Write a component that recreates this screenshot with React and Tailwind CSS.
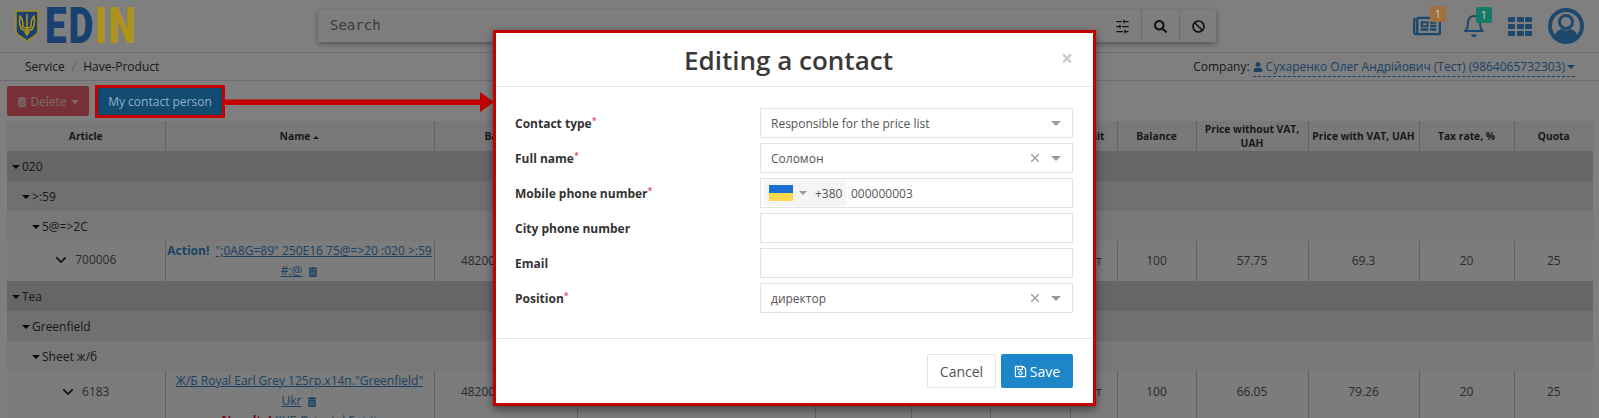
import { FaBan, FaChevronDown, FaRegNewspaper, FaRegSave, FaSearch, FaTrashAlt, FaUser } from 'react-icons/fa';
import { LuBell, LuSlidersHorizontal, LuX } from 'react-icons/lu';

const COLS = ['w-[158px]', 'w-[269px]', 'w-[143px]', 'w-[238px]', 'w-[96px]', 'w-[79px]', 'w-[80px]', 'w-[47px]', 'w-[79px]', 'w-[112px]', 'w-[111px]', 'w-[95px]', 'w-[79px]'];

const HEADERS = ['Article', 'Name', 'Barcode', '', '', '', '', 'Unit', 'Balance', 'Price without VAT, UAH', 'Price with VAT, UAH', 'Tax rate, %', 'Quota'];

const Caret = ({ className = 'border-t-[#333]' }) => (
  <span className={`inline-block w-0 h-0 border-x-[4px] border-t-[4px] border-x-transparent ${className}`} />
);

const Trident = () => (
  <svg viewBox="0 0 24 32" className="w-[24px] h-[32px] shrink-0">
    <path d="M1 1h22v20c0 4-6 6-11 10C7 27 1 25 1 21z" fill="#184070" stroke="#a88c1a" strokeWidth="1.5" />
    <path d="M12 4v18M12 25l-2-3h4zM5 6c-1 6 0 12 3 14h8c3-2 4-8 3-14-2 2-3 7-3 11-1 1-3 1-4 1s-3 0-4-1c0-4-1-9-3-11z" fill="none" stroke="#b0941a" strokeWidth="1.5" />
  </svg>
);

const AvatarIcon = () => (
  <svg viewBox="0 0 36 36" className="w-[36px] h-[36px]">
    <circle cx="18" cy="18" r="16" fill="none" stroke="#3a8fd6" strokeWidth="4" />
    <circle cx="18" cy="14" r="6.5" fill="none" stroke="#3a8fd6" strokeWidth="3" />
    <path d="M6 29c2-6 6-8 8-8 2 2 6 2 8 0 2 0 6 2 8 8-6 6-18 6-24 0z" fill="#3a8fd6" />
  </svg>
);

const GroupRow = ({ label, depth, bg }) => (
  <tr className={`h-[30px] text-[#333] ${bg}`}>
    <td colSpan={13} className={depth === 0 ? 'pl-[5px]' : depth === 1 ? 'pl-[15px]' : 'pl-[25px]'}>
      <span className="inline-flex items-center gap-[2px]">
        <Caret className="border-t-[#111]" />
        {label}
      </span>
    </td>
  </tr>
);

const DataRow = ({ code, name, tall, price, vat }) => {
  const top = tall ? 'align-top pt-[12px]' : '';
  return (
    <tr className="bg-[#f8f8f8] text-center">
      <td className={tall ? 'h-[80px] align-top pt-[12px]' : 'h-[40px]'}>
        <span className="inline-flex items-center gap-[8px]">
          <FaChevronDown className="text-[12px] text-[#333]" />
          {code}
        </span>
      </td>
      <td className="border-l border-[#c4c4c4] align-top leading-[20px]">{name}</td>
      <td className={`border-l border-[#c4c4c4] ${top}`}>4820000000000</td>
      <td className="border-l border-[#c4c4c4]" />
      <td className="border-l border-[#c4c4c4]" />
      <td className="border-l border-[#c4c4c4]" />
      <td className="border-l border-[#c4c4c4]" />
      <td className={`border-l border-[#c4c4c4] ${top}`}>шт</td>
      <td className={`border-l border-[#c4c4c4] ${top}`}>100</td>
      <td className={`border-l border-[#c4c4c4] ${top}`}>{price}</td>
      <td className={`border-l border-[#c4c4c4] ${top}`}>{vat}</td>
      <td className={`border-l border-[#c4c4c4] ${top}`}>20</td>
      <td className={`border-l border-[#c4c4c4] ${top}`}>25</td>
    </tr>
  );
};

const Label = ({ text, required }) => (
  <div className="w-[245px] pt-[1px] text-[12px] font-bold text-[#333]">
    {text}
    {required && <sup className="text-[#e0103a] text-[9px] font-normal top-[-4px]">*</sup>}
  </div>
);

const SelectField = ({ value, clearable }) => (
  <div className="w-[313px] h-[30px] border border-[#e2e2e2] flex items-center pl-[10px] pr-[11px] text-[12px] text-[#555]">
    <span className="flex-1 pt-[1px]">{value}</span>
    {clearable && <LuX className="text-[14px] text-[#999] mr-[9px]" />}
    <Caret className="border-t-[#999] border-x-[5px] border-t-[5px]" />
  </div>
);

const Row = ({ children }) => <div className="flex items-center h-[30px]">{children}</div>;

export default function App() {
  return (
    <div className="relative w-[1599px] h-[418px] overflow-hidden bg-white text-[12px] text-[#555] font-['Open_Sans',sans-serif]">
      {/* Header */}
      <header className="h-[53px] border-b border-[#ddd] flex items-center pl-[15px] pr-[15px]">
        <div className="w-[303px] flex items-center">
          <div className="relative z-20"><Trident /></div>
          <div className="relative z-20 ml-[6px] flex text-[50px] leading-[52px] font-['Roboto',sans-serif] font-black tracking-[2.5px] scale-x-[0.77] origin-left">
            <span className="text-[#184070]">ED</span>
            <span className="text-[#b0941a]">IN</span>
          </div>
        </div>
        <div className="w-[898px] h-[32px] flex items-center shadow-[0_2px_6px_rgba(0,0,0,0.35)] bg-[#fcfcfc]">
          <span className="flex-1 pl-[12px] pb-[2px] font-['DejaVu_Sans_Mono',monospace] text-[14px] text-[#777]">Search</span>
          <div className="w-[38px] h-full flex items-center justify-center text-[#222]"><LuSlidersHorizontal className="text-[15px]" /></div>
          <div className="w-[38px] h-full flex items-center justify-center border-l border-[#ddd] text-[#222]"><FaSearch className="text-[13px]" /></div>
          <div className="w-[37px] h-full flex items-center justify-center border-l border-[#ddd] text-[#222]"><FaBan className="text-[13px]" /></div>
        </div>
        <div className="flex-1 flex items-center text-[#3a8fd6]">
          <div className="relative ml-[197px]">
            <FaRegNewspaper className="text-[28px]" />
            <span className="absolute z-20 left-[17px] top-[-6px] w-[16px] h-[16px] rounded-[2px] bg-[#a07040] text-[#c8c8c8] text-[11px] leading-[16px] text-center">1</span>
          </div>
          <div className="relative ml-[21px]">
            <LuBell className="text-[24px]" />
            <span className="absolute z-20 left-[14px] top-[-7px] w-[16px] h-[16px] rounded-[2px] bg-[#157a68] text-[#c8c8c8] text-[11px] leading-[16px] text-center">1</span>
          </div>
          <div className="ml-[22px] grid grid-cols-3 gap-[2px]">
            {[0, 1, 2, 3, 4, 5, 6, 7, 8].map((i) => (
              <span key={i} className="w-[7px] h-[5px] rounded-[1px] bg-[#3a8fd6] block" />
            ))}
          </div>
          <div className="ml-[16px]"><AvatarIcon /></div>
        </div>
      </header>

      {/* Breadcrumb */}
      <div className="h-[28px] border-b border-[#ddd] flex items-center pl-[25px] pr-[24px] pt-[1px] text-[#333]">
        <span>Service</span>
        <span className="mx-[7px] text-[#bbb]">/</span>
        <span>Have-Product</span>
        <div className="ml-auto flex items-center">
          <span>Company:</span>
          <span className="ml-[3px] flex items-center gap-[2px] border-b border-dashed border-[#3585c8] text-[#3585c8] leading-[18px]">
            <FaUser className="text-[10px] mr-[1px]" />
            Сухаренко Олег Андрійович (Тест) (9864065732303)
            <Caret className="border-t-[#3585c8]" />
          </span>
        </div>
      </div>

      {/* Toolbar */}
      <div className="flex items-center gap-[6px] pl-[7px] h-[40px]">
        <button type="button" className="w-[82px] h-[30px] pt-[1px] rounded-[2px] bg-[#f0606f] text-[#f5d5d8] flex items-center justify-center gap-[3px]">
          <FaTrashAlt className="text-[10px]" />
          Delete
          <Caret className="border-t-[#f5d5d8] ml-[1px]" />
        </button>
        <button type="button" className="relative z-20 w-[130px] h-[33px] pt-[1px] border-[3px] border-[#c40000] bg-[#124a70] text-[#8fb0c8] text-[12px] rounded-[1px]">
          My contact person
        </button>
      </div>

      {/* Table */}
      <table className="ml-[7px] w-[1586px] table-fixed border-collapse text-[12px]">
        <colgroup>
          {COLS.map((c, i) => <col key={i} className={c} />)}
        </colgroup>
        <thead>
          <tr className="h-[30px] bg-[#f2f2f2] text-[#333]">
            {HEADERS.map((h, i) => (
              <th key={i} className={`text-[10.3px] leading-[14px] font-bold text-center ${i ? 'border-l border-[#c4c4c4]' : ''}`}>
                {h}
                {h === 'Name' && <span className="inline-block ml-[3px] align-middle w-0 h-0 border-x-[3px] border-b-[3px] border-x-transparent border-b-[#333]" />}
              </th>
            ))}
          </tr>
        </thead>
        <tbody>
          <GroupRow label="020" depth={0} bg="bg-[#cccccc]" />
          <GroupRow label=">:59" depth={1} bg="bg-[#e0e0e0]" />
          <GroupRow label="5@=>2C" depth={2} bg="bg-[#f0f0f0]" />
          <DataRow
            code="700006"
            price="57.75"
            vat="69.3"
            name={
              <>
                <b className="text-[#3585c8]">Action!</b>{' '}
                <a className="ml-[3px] underline text-[#3585c8]">";0A8G=89" 250E16 75@=>20 :020 >:59 #:@</a>
                <FaTrashAlt className="inline ml-[6px] text-[10px] text-[#3585c8]" />
              </>
            }
          />
          <GroupRow label="Tea" depth={0} bg="bg-[#cccccc]" />
          <GroupRow label="Greenfield" depth={1} bg="bg-[#e0e0e0]" />
          <GroupRow label="Sheet ж/б" depth={2} bg="bg-[#f0f0f0]" />
          <DataRow
            code="6183"
            tall
            price="66.05"
            vat="79.26"
            name={
              <>
                <a className="underline text-[#3585c8]">Ж/Б Royal Earl Grey 125гр.х14п."Greenfield" Ukr</a>
                <FaTrashAlt className="inline ml-[6px] text-[10px] text-[#3585c8]" />
                <div>
                  <b className="text-[#e0103a]">Novelty!</b>{' '}
                  <a className="underline text-[#3585c8]">Ж/Б Oriental Spirit</a>
                </div>
              </>
            }
          />
        </tbody>
      </table>

      {/* Dim layer */}
      <div className="absolute inset-0 z-10 bg-black/50" />

      {/* Annotation arrow */}
      <svg viewBox="0 0 270 20" className="absolute left-[224px] top-[92px] z-20 w-[270px] h-[20px]">
        <path d="M0 7.5H256V0L270 10L256 20V13H0z" fill="#c40000" />
      </svg>

      {/* Modal */}
      <div className="absolute left-[493px] top-[30px] z-30 w-[603px] h-[376px] border-[3px] border-[#c40000] bg-white flex flex-col shadow-[0_3px_9px_rgba(0,0,0,0.5)]">
        <div className="relative h-[54px] shrink-0 border-b border-[#e5e5e5] flex items-center justify-center">
          <h2 className="text-[26px] font-semibold text-[#3a3a3a] mr-[12px] pt-[1px]">Editing a contact</h2>
          <span className="absolute right-[20px] top-[10px] text-[21px] font-bold leading-[30px] text-[#ccc]">×</span>
        </div>
        <div className="h-[252px] shrink-0 border-b border-[#e5e5e5] pt-[21px] pl-[19px] pr-[19px] flex flex-col gap-[5px]">
          <Row>
            <Label text="Contact type" required />
            <SelectField value="Responsible for the price list" />
          </Row>
          <Row>
            <Label text="Full name" required />
            <SelectField value="Соломон" clearable />
          </Row>
          <Row>
            <Label text="Mobile phone number" required />
            <div className="w-[313px] h-[30px] border border-[#e2e2e2] flex items-center pl-[3px] text-[12px] text-[#555]">
              <div className="h-[26px] w-[82px] rounded-[3px] bg-[#f5f5f5] flex items-center pl-[5px]">
                <span className="w-[24px] h-[16px] flex flex-col">
                  <span className="h-[8px] bg-[#1a6fd0] block" />
                  <span className="h-[8px] bg-[#ffd84d] block" />
                </span>
                <Caret className="border-t-[#999] ml-[6px]" />
                <span className="ml-[8px] pt-[1px]">+380</span>
              </div>
              <span className="ml-[5px] pt-[1px]">000000003</span>
            </div>
          </Row>
          <Row>
            <Label text="City phone number" />
            <div className="w-[313px] h-[30px] border border-[#e2e2e2]" />
          </Row>
          <Row>
            <Label text="Email" />
            <div className="w-[313px] h-[30px] border border-[#e2e2e2]" />
          </Row>
          <Row>
            <Label text="Position" required />
            <SelectField value="директор" clearable />
          </Row>
        </div>
        <div className="flex-1 flex items-center justify-end gap-[5px] pr-[20px]">
          <button type="button" className="w-[69px] h-[34px] border border-[#e5e5e5] rounded-[2px] text-[14px] text-[#555]">Cancel</button>
          <button type="button" className="w-[72px] h-[34px] bg-[#1c86c8] rounded-[2px] text-[14px] text-white flex items-center justify-center gap-[3px]">
            <FaRegSave className="text-[13px]" />
            Save
          </button>
        </div>
      </div>
    </div>
  );
}
